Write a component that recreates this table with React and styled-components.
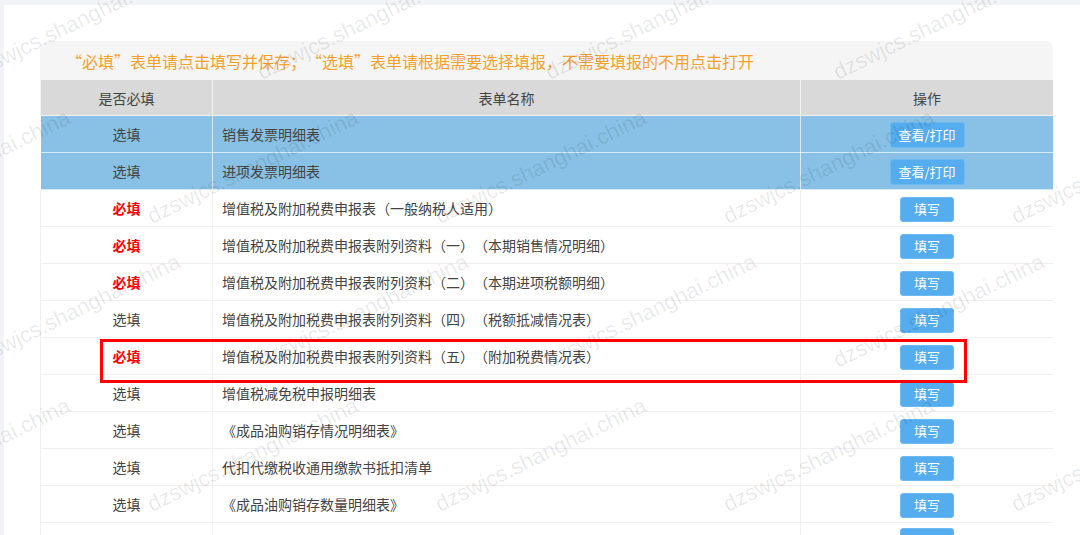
import React from 'react'
import styled, { createGlobalStyle } from 'styled-components'

const GlobalStyle = createGlobalStyle`
  html, body {
    margin: 0;
    padding: 0;
    background: #f2f3f6;
  }
  body {
    font-family: "Noto Sans CJK SC", "Noto Sans", sans-serif;
    text-spacing-trim: space-all;
  }
`

const Page = styled.div`
  position: relative;
  width: 1080px;
  height: 535px;
  overflow: hidden;
  padding: 5px 0 0 4px;
  box-sizing: border-box;
`

const Panel = styled.div`
  background: #fff;
  height: 100%;
  padding: 36px 0 0 36px;
  box-sizing: border-box;
`

const Card = styled.div`
  position: relative;
  width: 1013px;
  border-radius: 8px 8px 0 0;
  overflow: hidden;
`

const Notice = styled.div`
  height: 39px;
  background: #f5f5f5;
  padding-left: 26px;
  color: #f5a02a;
  font-size: 16px;
  line-height: 41px;
  white-space: nowrap;
`

const Table = styled.table`
  width: 100%;
  border-collapse: collapse;
  table-layout: fixed;
  font-size: 14px;
  color: #444;
`

const HeadCell = styled.th`
  height: 35px;
  padding: 0;
  background: #d9d9d9;
  border: 1px solid #f3f3f3;
  border-top: none;
  font-weight: normal;
  color: #444;
  text-align: center;
`

const Row = styled.tr`
  background: ${p => (p.$view ? '#88c1e5' : '#fff')};
`

const Cell = styled.td`
  height: 36px;
  padding: 0 ${p => (p.$left ? '9px' : '0')};
  border: 1px solid ${p => (p.$view ? 'rgba(255,255,255,0.65)' : '#f0f0f0')};
  text-align: ${p => (p.$left ? 'left' : 'center')};
  white-space: nowrap;
  line-height: 20px;
`

const Need = styled.span`
  color: ${p => (p.$must ? '#ff0000' : '#444')};
  font-weight: ${p => (p.$must ? 'bold' : 'normal')};
`

const Button = styled.button`
  width: ${p => (p.$wide ? '75px' : '54px')};
  height: ${p => (p.$wide ? '26px' : '25px')};
  margin-top: 2px;
  padding: 0;
  background: #55acee;
  border: 1px solid #6db9f1;
  border-radius: 3px;
  color: #fff;
  font-family: inherit;
  font-size: 13px;
  line-height: 22px;
  cursor: pointer;
`

const Highlight = styled.div`
  position: absolute;
  left: 60px;
  top: 298px;
  width: 867px;
  height: 44px;
  border: 3px solid #ff0000;
  box-sizing: border-box;
  pointer-events: none;
`

const Watermarks = styled.div`
  position: absolute;
  inset: 0;
  pointer-events: none;
  overflow: hidden;
`

const Watermark = styled.span.attrs(p => ({
  style: { left: `${p.$x}px`, top: `${p.$y - 18}px` },
}))`
  position: absolute;
  font-family: "Liberation Sans", Arial, sans-serif;
  font-size: 22px;
  line-height: 22px;
  color: rgba(0, 0, 0, 0.09);
  white-space: nowrap;
  transform-origin: 0 18px;
  transform: rotate(-26deg);
`

const rows = [
  { must: false, name: '销售发票明细表', view: true },
  { must: false, name: '进项发票明细表', view: true },
  { must: true, name: '增值税及附加税费申报表（一般纳税人适用）' },
  { must: true, name: '增值税及附加税费申报表附列资料（一）（本期销售情况明细）' },
  { must: true, name: '增值税及附加税费申报表附列资料（二）（本期进项税额明细）' },
  { must: false, name: '增值税及附加税费申报表附列资料（四）（税额抵减情况表）' },
  { must: true, name: '增值税及附加税费申报表附列资料（五）（附加税费情况表）' },
  { must: false, name: '增值税减免税申报明细表' },
  { must: false, name: '《成品油购销存情况明细表》' },
  { must: false, name: '代扣代缴税收通用缴款书抵扣清单' },
  { must: false, name: '《成品油购销存数量明细表》' },
  // last row is cut by the window: only the top edge of its button shows
  { cut: true },
]

// watermark lattice: rows every 144px, columns every 288px
const marks = []
;[80, 224, 368, 512].forEach((y, r) => {
  const start = r % 2 === 0 ? -26 : -136
  for (let x = start; x < 1080; x += 288) marks.push({ x, y })
})

const App = () => (
  <Page>
    <GlobalStyle />
    <Panel>
      <Card>
        <Notice>“必填”表单请点击填写并保存；“选填”表单请根据需要选择填报，不需要填报的不用点击打开</Notice>
        <Table>
          <colgroup>
            <col style={{ width: 172 }} />
            <col style={{ width: 588 }} />
            <col style={{ width: 253 }} />
          </colgroup>
          <thead>
            <tr>
              <HeadCell>是否必填</HeadCell>
              <HeadCell>表单名称</HeadCell>
              <HeadCell>操作</HeadCell>
            </tr>
          </thead>
          <tbody>
            {rows.map((r, i) => (
              <Row key={i} $view={r.view}>
                <Cell $view={r.view}>
                  {!r.cut && <Need $must={r.must}>{r.must ? '必填' : '选填'}</Need>}
                </Cell>
                <Cell $view={r.view} $left>
                  {r.name}
                </Cell>
                <Cell $view={r.view}>
                  <Button $wide={r.view}>{r.cut ? '' : r.view ? '查看/打印' : '填写'}</Button>
                </Cell>
              </Row>
            ))}
          </tbody>
        </Table>
        <Highlight />
      </Card>
    </Panel>
    <Watermarks>
      {marks.map((m, i) => (
        <Watermark key={i} $x={m.x} $y={m.y}>
          dzswjcs.shanghai.china
        </Watermark>
      ))}
    </Watermarks>
  </Page>
)

export default App
